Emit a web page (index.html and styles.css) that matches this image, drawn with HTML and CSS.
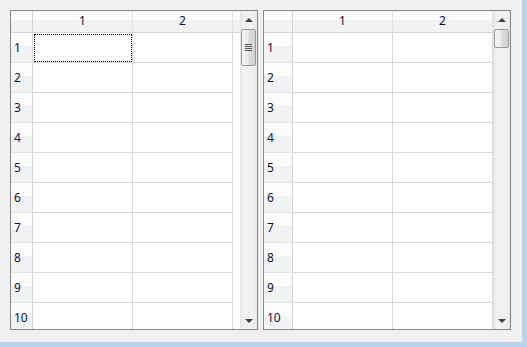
FILE: index.html
```html
<!doctype html>
<html>
<head>
<title>Grids</title>
<link rel="stylesheet" href="styles.css">
</head>
<body>
<div class="win">
<div class="tbl narrow">
  <div class="grid">
    <div class="hd corner"></div><div class="hd">1</div><div class="hd">2</div><div class="hd fill"></div>
    <div class="rh">1</div><div class="c focus"></div><div class="c"></div><div class="f"></div>
    <div class="rh">2</div><div class="c"></div><div class="c"></div><div class="f"></div>
    <div class="rh">3</div><div class="c"></div><div class="c"></div><div class="f"></div>
    <div class="rh">4</div><div class="c"></div><div class="c"></div><div class="f"></div>
    <div class="rh">5</div><div class="c"></div><div class="c"></div><div class="f"></div>
    <div class="rh">6</div><div class="c"></div><div class="c"></div><div class="f"></div>
    <div class="rh">7</div><div class="c"></div><div class="c"></div><div class="f"></div>
    <div class="rh">8</div><div class="c"></div><div class="c"></div><div class="f"></div>
    <div class="rh">9</div><div class="c"></div><div class="c"></div><div class="f"></div>
    <div class="rh">10</div><div class="c"></div><div class="c"></div><div class="f"></div>
  </div>
  <div class="vs">
    <div class="btn"><span class="up"></span></div>
    <div class="track"><div class="thumb long"><span class="grip"></span></div></div>
    <div class="btn"><span class="down"></span></div>
  </div>
</div>
<div class="tbl wide">
  <div class="grid">
    <div class="hd corner"></div><div class="hd">1</div><div class="hd">2</div>
    <div class="rh">1</div><div class="c"></div><div class="c"></div>
    <div class="rh">2</div><div class="c"></div><div class="c"></div>
    <div class="rh">3</div><div class="c"></div><div class="c"></div>
    <div class="rh">4</div><div class="c"></div><div class="c"></div>
    <div class="rh">5</div><div class="c"></div><div class="c"></div>
    <div class="rh">6</div><div class="c"></div><div class="c"></div>
    <div class="rh">7</div><div class="c"></div><div class="c"></div>
    <div class="rh">8</div><div class="c"></div><div class="c"></div>
    <div class="rh">9</div><div class="c"></div><div class="c"></div>
    <div class="rh">10</div><div class="c"></div><div class="c"></div>
  </div>
  <div class="vs">
    <div class="btn"><span class="up"></span></div>
    <div class="track"><div class="thumb short"></div></div>
    <div class="btn"><span class="down"></span></div>
  </div>
</div>
</div>
</body>
</html>
```

FILE: styles.css
```css
html, body {margin:0; padding:0; background:#bad2ea}
body {width:527px; height:347px; overflow:hidden}
.win {width:522px; height:342px; box-sizing:border-box; padding:10px 0 0 10px; background:#f0f0f0; display:flex; gap:5px; align-items:flex-start}

.tbl {width:248px; height:320px; box-sizing:border-box; border:1px solid #828790; background:#fff; display:flex; overflow:hidden}
.grid {flex:1; display:grid; grid-auto-rows:30px; grid-template-rows:22px; align-content:start; font:12px "Noto Sans", "DejaVu Sans", sans-serif; color:#101040; overflow:hidden}
.narrow .grid {grid-template-columns:22px 100px 100px 7px}
.wide .grid {grid-template-columns:29px 100px 100px}

.hd {box-sizing:border-box; border-bottom:1px solid #d5d5d5; border-right:1px solid #e3e4e6; background:linear-gradient(#fcfcfc 0 45%, #f1f2f4 45%); text-align:center; line-height:20px}
.hd.corner {border-right-color:#d5d5d5}
.hd.fill {border-right:0}
.rh {box-sizing:border-box; border-right:1px solid #d5d5d5; border-bottom:1px solid #e6e7e9; background:linear-gradient(#fcfcfc 0 45%, #f1f2f4 45%); padding-left:3px; line-height:29px}
.c {box-sizing:border-box; border-right:1px solid #d8d8d8; border-bottom:1px solid #d8d8d8}
.focus {outline:1px dotted #000; outline-offset:-2px}
.f {background:#fff}

.vs {width:17px; flex:none; display:flex; flex-direction:column; background:linear-gradient(to right, #e4e4e4, #f2f2f2 20%, #f0f0f0 80%, #e8e8e8)}
.btn {height:17px; display:flex; align-items:center; justify-content:center; flex:none}
.track {flex:1; padding-top:1px}
.up, .down {width:0; height:0; border-left:4px solid transparent; border-right:4px solid transparent}
.up {border-bottom:4px solid #404040; margin-left:1px}
.down {border-top:4px solid #404040; margin-left:1px}
.thumb {margin-left:1px; width:15px; box-sizing:border-box; border:1px solid #979a9f; border-radius:2px; background:linear-gradient(to right, #f4f4f4, #ececec 45%, #dcdcdc 55%, #d2d2d2); display:flex; align-items:center; justify-content:center}
.thumb.long {height:37px}
.thumb.short {height:19px}
.grip {width:7px; height:7px; background:repeating-linear-gradient(#555 0 1px, #e8e8e8 1px 2px)}
```
